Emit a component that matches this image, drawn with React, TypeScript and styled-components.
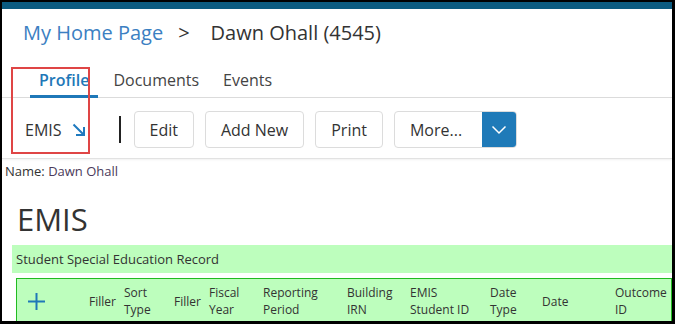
import styled, { createGlobalStyle } from "styled-components";

const GlobalStyle = createGlobalStyle`
  html, body {
    margin: 0;
    padding: 0;
    background: #fff;
  }
  body {
    font-family: "Open Sans", "Liberation Sans", sans-serif;
    color: #333;
  }
`;

interface IColumn {
  lines: string[];
  width: number;
}

const columns: IColumn[] = [
  { lines: ["Filler"], width: 35 },
  { lines: ["Sort", "Type"], width: 50 },
  { lines: ["Filler"], width: 35 },
  { lines: ["Fiscal", "Year"], width: 54 },
  { lines: ["Reporting", "Period"], width: 84 },
  { lines: ["Building", "IRN"], width: 63 },
  { lines: ["EMIS", "Student ID"], width: 80 },
  { lines: ["Date", "Type"], width: 52 },
  { lines: ["Date"], width: 73 },
  { lines: ["Outcome", "ID"], width: 60 },
];

function App() {
  const template = ["72px", ...columns.map((c) => `${c.width}px`)].join(" ");

  return (
    <>
      <GlobalStyle />
      <Frame>
        <TopBar />
        <Breadcrumb>
          <Crumb>My Home Page</Crumb>
          <Separator>&gt;</Separator>
          <Current>Dawn Ohall (4545)</Current>
        </Breadcrumb>
        <TabBar>
          <Tab $active>Profile</Tab>
          <Tab>Documents</Tab>
          <Tab>Events</Tab>
        </TabBar>
        <Toolbar>
          <SectionLabel>EMIS</SectionLabel>
          <Arrow width="14" height="14" viewBox="0 0 14 14">
            <path d="M1.5 1.5 L12 12 M12 4 V12 H4" fill="none" stroke="#1f7abf" strokeWidth="2" />
          </Arrow>
          <Divider />
          <Button>Edit</Button>
          <Button>Add New</Button>
          <Button>Print</Button>
          <Split>
            <SplitLabel>More...</SplitLabel>
            <SplitToggle>
              <svg width="16" height="10" viewBox="0 0 16 10">
                <path d="M1.5 1.5 L8 8 L14.5 1.5" fill="none" stroke="#fff" strokeWidth="1.5" />
              </svg>
            </SplitToggle>
          </Split>
        </Toolbar>
        <NameLine>
          Name: <NameValue>Dawn Ohall</NameValue>
        </NameLine>
        <Heading>EMIS</Heading>
        <SectionBand>Student Special Education Record</SectionBand>
        <Grid>
          <HeaderRow style={{ gridTemplateColumns: template }}>
            <PlusCell>
              <svg width="17" height="17" viewBox="0 0 17 17">
                <path d="M8.5 0 V17 M0 8.5 H17" stroke="#1f78b8" strokeWidth="2" />
              </svg>
            </PlusCell>
            {columns.map((c, i) => (
              <HeadCell key={i}>
                {c.lines.map((l, j) => (
                  <span key={j}>{l}</span>
                ))}
              </HeadCell>
            ))}
          </HeaderRow>
        </Grid>
        <Highlight />
      </Frame>
    </>
  );
}

export default App;

const Frame = styled.div`
  position: relative;
  box-sizing: border-box;
  width: 675px;
  height: 324px;
  border-style: solid;
  border-color: #000;
  border-width: 2px 3px 3px 2px;
  overflow: hidden;
  background: #fff;
`;

const TopBar = styled.div`
  height: 7px;
  background: #0b5b80;
`;

const Breadcrumb = styled.div`
  display: flex;
  align-items: center;
  padding: 10px 0 0 21px;
  font-size: 20px;
  line-height: 28px;
`;

const Crumb = styled.span`
  color: #3b80c2;
`;

const Separator = styled.span`
  margin: 0 21px 0 15px;
  color: #333;
`;

const Current = styled.span`
  color: #333;
`;

const TabBar = styled.div`
  display: flex;
  gap: 6px;
  margin-top: 22px;
  padding-left: 28px;
  border-bottom: 1px solid #dcdcdc;
`;

const Tab = styled.div<{ $active?: boolean }>`
  padding: 0 9px 4px;
  margin-bottom: -1px;
  font-size: 16px;
  line-height: 22px;
  font-weight: ${(p) => (p.$active ? 600 : 400)};
  color: ${(p) => (p.$active ? "#1f78b8" : "#444")};
  border-bottom: 3px solid ${(p) => (p.$active ? "#1f78b8" : "transparent")};
`;

const Toolbar = styled.div`
  display: flex;
  align-items: center;
  padding: 13px 0 10px 23px;
  border-bottom: 1px solid #e2e2e2;
  box-shadow: 0 1px 2px rgba(0, 0, 0, 0.06);
`;

const SectionLabel = styled.span`
  font-size: 16px;
  color: #333;
`;

const Arrow = styled.svg`
  margin-left: 10px;
`;

const Divider = styled.div`
  width: 2px;
  height: 27px;
  margin: 0 13px 0 33px;
  background: #222;
`;

const Button = styled.div`
  box-sizing: border-box;
  height: 37px;
  padding: 0 15px;
  margin-right: 11px;
  display: flex;
  align-items: center;
  border: 1px solid #dcdcdc;
  border-radius: 4px;
  font-size: 16px;
  color: #333;
  background: #fff;
`;

const Split = styled.div`
  box-sizing: border-box;
  display: flex;
  height: 37px;
  border: 1px solid #dcdcdc;
  border-radius: 4px;
  overflow: hidden;
`;

const SplitLabel = styled.div`
  width: 72px;
  padding-left: 15px;
  display: flex;
  align-items: center;
  font-size: 16px;
  color: #333;
`;

const SplitToggle = styled.div`
  width: 34px;
  display: flex;
  align-items: center;
  justify-content: center;
  background: #1f7ab8;
`;

const NameLine = styled.div`
  margin-top: 4px;
  padding-left: 3px;
  font-size: 13px;
  line-height: 17px;
  color: #333;
`;

const NameValue = styled.span`
  color: #4a3a5a;
`;

const Heading = styled.h1`
  margin: 19px 0 0 15px;
  font-size: 31px;
  line-height: 40px;
  font-weight: 400;
  color: #333;
`;

const SectionBand = styled.div`
  margin: 6px 0 0 10px;
  height: 28px;
  padding-left: 4px;
  display: flex;
  align-items: center;
  font-size: 13px;
  color: #333;
  background: #bdfebd;
`;

const Grid = styled.div`
  margin: 5px 0 0 14px;
  border: 1px solid #22bb22;
  background: #bdfebd;
`;

const HeaderRow = styled.div`
  display: grid;
  height: 44px;
  align-items: center;
`;

const PlusCell = styled.div`
  display: flex;
  padding-left: 11px;
`;

const HeadCell = styled.div`
  display: flex;
  flex-direction: column;
  font-size: 12px;
  line-height: 17px;
  color: #333;
  white-space: nowrap;
`;

const Highlight = styled.div`
  position: absolute;
  left: 9px;
  top: 65px;
  width: 79px;
  height: 87px;
  box-sizing: border-box;
  border: 2px solid #df4545;
  pointer-events: none;
`;
